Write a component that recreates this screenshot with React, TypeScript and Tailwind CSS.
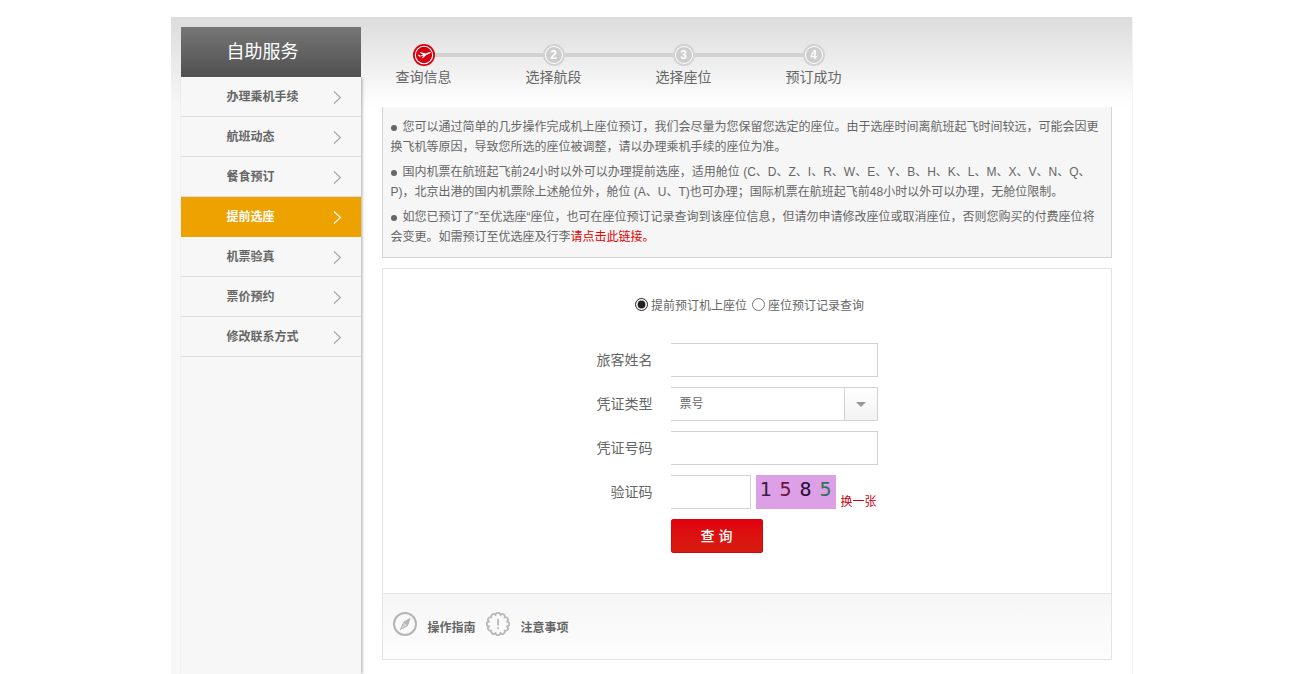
import React, { useState } from 'react';

const menuItems = ['办理乘机手续', '航班动态', '餐食预订', '提前选座', '机票验真', '票价预约', '修改联系方式'];

const steps = ['查询信息', '选择航段', '选择座位', '预订成功'];

const captcha = [
  { digit: '1', color: 'text-[#3a1c46]' },
  { digit: '5', color: 'text-[#6b1640]' },
  { digit: '8', color: 'text-[#221038]' },
  { digit: '5', color: 'text-[#2f7358]' },
];

const inputClass = 'h-[34px] border border-l-0 border-[#d2d2d2] bg-white px-2 text-xs outline-none';
const labelClass = 'text-right text-sm leading-[34px]';

function Chevron() {
  return (
    <svg width="9" height="14" viewBox="0 0 9 14" fill="none" stroke="currentColor" strokeWidth="1.1" aria-hidden="true">
      <path d="M1 .5l6.5 6L1 12.5" />
    </svg>
  );
}

function PlaneBadge() {
  return (
    <svg width="22" height="22" viewBox="0 0 22 22" aria-hidden="true">
      <circle cx="11" cy="11" r="11" fill="#d5000f" />
      <circle cx="11" cy="11" r="8.7" fill="none" stroke="#fff" strokeWidth="1.1" />
      <path d="M4.8 10.9l1-.3 1.6 1.1 2.7-1-3.6-2.1 1.2-.4 5 1.2 3.2-1.2c.8-.3 1.6-.1 1.7.3.1.4-.4.8-1 1.1l-3.3 1.3-3.7 3.3-1.1.3 1.9-2.8-3.2.9c-.6.2-1 .1-1.3-.4z" fill="#fff" />
    </svg>
  );
}

function CompassIcon() {
  return (
    <svg width="24" height="24" viewBox="0 0 24 24" aria-hidden="true">
      <circle cx="12" cy="12" r="11" fill="none" stroke="#b5b5b5" strokeWidth="2" />
      <path d="M17 6.5l-6.2 3.7-3.4 7.4 7-3.8z" fill="#d2d2d2" />
      <path d="M17 6.5l-6.2 3.7 3.6 3.6z" fill="#b5b5b5" />
      <path d="M17 6.5l-6.2 3.7-3.4 7.4 7-3.8z" fill="none" stroke="#b5b5b5" strokeWidth="1" />
    </svg>
  );
}

function NoticeIcon() {
  return (
    <svg width="24" height="24" viewBox="0 0 24 24" fill="none" stroke="#bababa" strokeWidth="1.9" aria-hidden="true">
      <path d="M9.5 2.7a2.6 2.6 0 0 1 5 0a2.6 2.6 0 0 1 4.3 2.5a2.6 2.6 0 0 1 2.5 4.3a2.6 2.6 0 0 1 0 5a2.6 2.6 0 0 1-2.5 4.3a2.6 2.6 0 0 1-4.3 2.5a2.6 2.6 0 0 1-5 0a2.6 2.6 0 0 1-4.3-2.5a2.6 2.6 0 0 1-2.5-4.3a2.6 2.6 0 0 1 0-5a2.6 2.6 0 0 1 2.5-4.3a2.6 2.6 0 0 1 4.3-2.5z" />
      <path d="M12 7v6.5M12 15.3v2" />
    </svg>
  );
}

function Sidebar() {
  return (
    <aside className="flex w-[190px] shrink-0 flex-col bg-[#f7f7f7] bg-[linear-gradient(#dcdcdc,#f7f7f7_90px)] pl-2.5 pt-2.5">
      <h2 className="bg-linear-to-b from-[#777] to-[#505050] pl-[46px] text-lg leading-[50px] text-white">自助服务</h2>
      <nav className="flex-1 bg-[#f7f7f7] shadow-[1px_0_3px_rgba(0,0,0,0.35)] [clip-path:inset(0_-8px_0_0)]">
        <ul>
          {menuItems.map((item) => {
            const active = item === '提前选座';
            return (
              <li key={item}>
                <a
                  href="#"
                  className={
                    active
                      ? 'flex h-10 items-center justify-between border-b border-[#eea200] bg-[#eea200] pl-[46px] pr-[19px] text-xs font-bold text-white'
                      : 'flex h-10 items-center justify-between border-b border-[#dcdcdc] pl-[46px] pr-[19px] text-xs font-bold'
                  }
                >
                  {item}
                  <span className={active ? 'pt-0.5 text-white' : 'pt-0.5 text-[#a5a5a5]'}>
                    <Chevron />
                  </span>
                </a>
              </li>
            );
          })}
        </ul>
      </nav>
    </aside>
  );
}

function Stepper() {
  return (
    <ol className="mb-5 flex gap-[74px] pl-3.5 text-sm">
      {steps.map((step, i) => (
        <li key={step} className="relative flex w-14 flex-col items-center gap-px">
          {i === 0 ? (
            <PlaneBadge />
          ) : (
            <span className="flex size-[22px] items-center justify-center rounded-full border-2 border-[#d2d2d2] bg-white p-px">
              <span className="size-4 rounded-full bg-[#cdcdcd] text-center text-xs font-bold leading-4 text-white">
                {i + 1}
              </span>
            </span>
          )}
          {i < steps.length - 1 && <span className="absolute left-[39px] top-[9px] h-1 w-[108px] bg-[#d2d2d2]" />}
          <span className="whitespace-nowrap leading-5">{step}</span>
        </li>
      ))}
    </ol>
  );
}

function Bullet() {
  return <span className="mr-1.5 inline-block size-1.5 rounded-full bg-current" />;
}

function Notice() {
  return (
    <section className="space-y-[5px] border border-t-0 border-[#d4d4d4] bg-[#f6f6f6] px-2 py-2.5 text-xs leading-5">
      <p>
        <Bullet />
        您可以通过简单的几步操作完成机上座位预订，我们会尽量为您保留您选定的座位。由于选座时间离航班起飞时间较远，可能会因更换飞机等原因，导致您所选的座位被调整，请以办理乘机手续的座位为准。
      </p>
      <p>
        <Bullet />
        国内机票在航班起飞前24小时以外可以办理提前选座，适用舱位 (C、D、Z、I、R、W、E、Y、B、H、K、L、M、X、V、N、Q、P)，北京出港的国内机票除上述舱位外，舱位 (A、U、T)也可办理；国际机票在航班起飞前48小时以外可以办理，无舱位限制。
      </p>
      <p>
        <Bullet />
        如您已预订了”至优选座“座位，也可在座位预订记录查询到该座位信息，但请勿申请修改座位或取消座位，否则您购买的付费座位将会变更。如需预订至优选座及行李
        <a href="#" className="text-[#e60000]">请点击此链接。</a>
      </p>
    </section>
  );
}

function SearchForm() {
  const [mode, setMode] = useState('reserve');

  return (
    <form className="pb-10 pt-[27px]" onSubmit={(e) => e.preventDefault()}>
      <div className="mb-[27px] flex h-5 items-center justify-center gap-[5px] pl-1.5 text-xs">
        <label className="flex items-center gap-[3px]">
          <input
            type="radio"
            name="mode"
            className="mb-1 size-[13px] accent-[#222]"
            checked={mode === 'reserve'}
            onChange={() => setMode('reserve')}
          />
          提前预订机上座位
        </label>
        <label className="flex items-center gap-[3px]">
          <input
            type="radio"
            name="mode"
            className="mb-1 size-[13px] accent-[#222]"
            checked={mode === 'record'}
            onChange={() => setMode('record')}
          />
          座位预订记录查询
        </label>
      </div>

      <div className="grid grid-cols-[270px_207px] gap-x-[18px] gap-y-2.5">
        <label htmlFor="passenger" className={labelClass}>旅客姓名</label>
        <input id="passenger" type="text" className={inputClass} />

        <label htmlFor="certType" className={labelClass}>凭证类型</label>
        <div className="relative">
          <select
            id="certType"
            className="h-[34px] w-full appearance-none border border-l-0 border-[#d2d2d2] bg-white pl-[9px] text-xs outline-none"
          >
            <option>票号</option>
            <option>身份证</option>
          </select>
          <span className="pointer-events-none absolute inset-y-px right-px flex w-[33px] items-center justify-center border-l border-[#d2d2d2] bg-linear-to-b from-white to-[#f3f3f3]">
            <svg width="10" height="5" viewBox="0 0 10 5" aria-hidden="true">
              <path d="M0 0h10L5 5z" fill="#999" />
            </svg>
          </span>
        </div>

        <label htmlFor="certNo" className={labelClass}>凭证号码</label>
        <input id="certNo" type="text" className={inputClass} />

        <label htmlFor="captcha" className={labelClass}>验证码</label>
        <div className="flex gap-[5px]">
          <input id="captcha" type="text" className={`${inputClass} w-20`} />
          <span className="flex h-[34px] w-20 bg-[#dda0e6] font-['DejaVu_Sans_Mono',monospace] text-xl leading-7">
            {captcha.map((c, i) => (
              <span key={i} className={`w-5 text-center ${c.color}`}>{c.digit}</span>
            ))}
          </span>
          <a href="#" className="self-end whitespace-nowrap text-xs leading-3.5 text-[#cc0011]">换一张</a>
        </div>

        <button
          type="submit"
          className="col-start-2 h-[34px] w-[92px] rounded-xs border border-[#cc0a10] bg-linear-to-b from-[#e2000f] to-[#d61c10] text-sm font-medium text-white"
        >
          查 询
        </button>
      </div>
    </form>
  );
}

export default function App() {
  return (
    <div
      lang="zh-CN"
      className="flex min-h-screen bg-white pl-[3px] pt-[17px] font-['Liberation_Sans','Noto_Sans_CJK_SC',sans-serif] text-[#666]"
    >
      <div className="mx-auto flex w-full max-w-[962px]">
        <Sidebar />
        <main className="min-w-0 flex-1 border-r border-[#f3f3f3] bg-[linear-gradient(#dcdcdc,#fff_90px)] pb-3.5 pl-[21px] pr-5 pt-[27px]">
          <Stepper />
          <Notice />
          <div className="mt-2.5 border border-[#e4e4e4] bg-white">
            <SearchForm />
            <footer className="flex h-[66px] items-center border-t border-[#e4e4e4] bg-linear-to-b from-[#f6f6f6] to-[#fdfdfd] pb-1.5 pl-2.5 text-xs font-bold">
              <a href="#" className="flex items-center gap-[11px]">
                <CompassIcon />
                <span className="pt-2">操作指南</span>
              </a>
              <a href="#" className="ml-2.5 flex items-center gap-[11px]">
                <NoticeIcon />
                <span className="pt-2">注意事项</span>
              </a>
            </footer>
          </div>
        </main>
      </div>
    </div>
  );
}
